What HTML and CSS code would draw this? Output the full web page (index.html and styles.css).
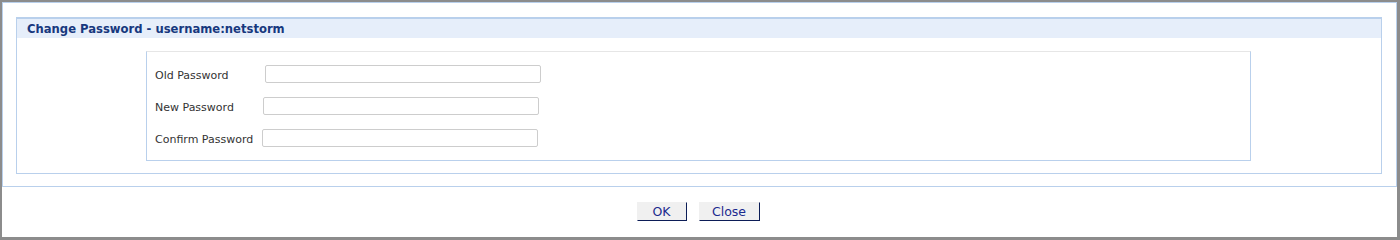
FILE: index.html
```html
<!DOCTYPE html>
<html lang="en">
<head>
    <meta charset="UTF-8">
    <title>Change Password</title>
    <link rel="stylesheet" href="styles.css">
</head>
<body>
    <div class="window">
        <div class="panel">
            <div class="section">
                <div class="section-title">Change Password - username:netstorm</div>
                <div class="form-box">
                    <div class="form-row">
                        <label for="old">Old Password</label>
                        <input type="password" id="old" class="field-old">
                    </div>
                    <div class="form-row">
                        <label for="new">New Password</label>
                        <input type="password" id="new" class="field-new">
                    </div>
                    <div class="form-row">
                        <label for="confirm">Confirm Password</label>
                        <input type="password" id="confirm" class="field-confirm">
                    </div>
                </div>
            </div>
        </div>
        <div class="buttons">
            <button class="btn btn-ok">OK</button>
            <button class="btn btn-close">Close</button>
        </div>
    </div>
</body>
</html>
```

FILE: styles.css
```css
* {
    margin: 0;
    padding: 0;
    box-sizing: border-box;
    font-family: "DejaVu Sans", Verdana, sans-serif;
}
body {
    background: #fff;
}
.window {
    width: 1400px;
    height: 240px;
    border-top: 2px solid #8c8c8c;
    border-left: 2px solid #8c8c8c;
    border-right: 3px solid #8c8c8c;
    border-bottom: 3px solid #8c8c8c;
    background: #fff;
}
.panel {
    border: 1px solid #b9d0ec;
    height: 185px;
    padding: 14px 14px 0 13px;
}
.section {
    border: 1px solid #b9d0ec;
    border-top-width: 2px;
    height: 157px;
}
.section-title {
    background: #e6eefa;
    height: 19px;
    line-height: 20px;
    padding-left: 10px;
    font-size: 11.6px;
    font-weight: bold;
    color: #17387e;
}
.form-box {
    margin: 13px 0 0 129px;
    width: 1105px;
    height: 110px;
    border: 1px solid #b9d0ec;
    border-top-color: #e6e6e6;
    padding: 13px 0 0 8px;
}
.form-row {
    display: flex;
    align-items: center;
    height: 18px;
    margin-bottom: 14px;
}
.form-row label {
    font-size: 11px;
    color: #333;
    padding-top: 2px;
}
.form-row input {
    width: 276px;
    height: 18px;
    border: 1px solid #cdcdcd;
    border-radius: 2px;
    outline: none;
    background: #fff;
}
.field-old {
    margin-left: 36px;
}
.field-new {
    margin-left: 29px;
}
.field-confirm {
    margin-left: 9px;
}
.buttons {
    display: flex;
    justify-content: center;
    gap: 12px;
    padding-top: 15px;
    padding-right: 3px;
}
.btn {
    height: 19px;
    background: #f0f0f0;
    border: 1px solid #f0f0f0;
    border-right-color: #0c1d57;
    border-bottom-color: #0c1d57;
    color: #1b2a8f;
    font-size: 12.5px;
    cursor: pointer;
}
.btn-ok {
    width: 50px;
}
.btn-close {
    width: 61px;
}
```
